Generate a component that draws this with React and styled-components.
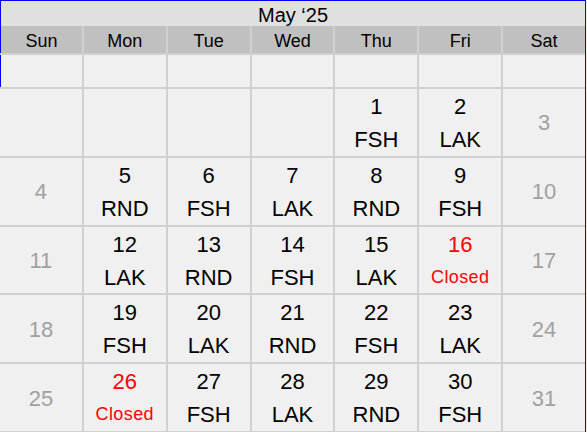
import React from "react";
import styled, { createGlobalStyle } from "styled-components";

const GlobalStyle = createGlobalStyle`
  html, body {
    margin: 0;
    padding: 0;
    background: #f0f0f0;
  }
  body {
    font-family: "Liberation Sans", Arial, sans-serif;
    color: #000;
  }
`;

const Sheet = styled.div`
  width: 586px;
  height: 432px;
  box-sizing: border-box;
  border-right: 1px solid #0000ff;
  display: flex;
  flex-direction: column;
  background: #f0f0f0;
`;

const Title = styled.div`
  height: 26px;
  border-top: 1px solid #0000ff;
  border-left: 1px solid #0000ff;
  background: #e0e0e0;
  display: flex;
  align-items: center;
  justify-content: center;
  font-size: 20px;
  padding-top: 3px;
  box-sizing: border-box;
`;

const HeaderRow = styled.div`
  display: grid;
  grid-template-columns: repeat(7, 1fr);
  column-gap: 2px;
  height: 27px;
  background: #d0d0d0;
`;

const HeaderCell = styled.div`
  background: #c0c0c0;
  display: flex;
  align-items: center;
  justify-content: center;
  font-size: 18px;
  padding-top: 4px;
  box-sizing: border-box;
  border-left: ${(p) => (p.$edge ? "1px solid #0000ff" : "none")};
`;

const Grid = styled.div`
  flex: 1;
  min-height: 0;
  display: grid;
  grid-template-columns: repeat(7, 1fr);
  grid-template-rows: 32px repeat(5, minmax(0, 1fr));
  gap: 2px;
  padding: 2px 0 1px;
  background: #d0d0d0;
`;

const Cell = styled.div`
  background: #f0f0f0;
  display: flex;
  flex-direction: column;
  align-items: center;
  justify-content: center;
  overflow: hidden;
  font-size: 22px;
  line-height: 33px;
  padding-top: 1px;
  box-sizing: border-box;
  color: ${(p) => (p.$weekend ? "#a0a0a0" : "#000")};
  border-left: ${(p) => (p.$edge ? "1px solid #0000ff" : "none")};
`;

const DayNum = styled.span`
  color: ${(p) => (p.$closed ? "#ff0000" : "inherit")};
`;

const Code = styled.span`
  color: ${(p) => (p.$closed ? "#ff0000" : "inherit")};
  font-size: ${(p) => (p.$closed ? "18px" : "22px")};
  letter-spacing: ${(p) => (p.$closed ? "0.4px" : "0")};
  line-height: 33px;
`;

const days = ["Sun", "Mon", "Tue", "Wed", "Thu", "Fri", "Sat"];

const weeks = [
  [null, null, null, null, [1, "FSH"], [2, "LAK"], [3]],
  [[4], [5, "RND"], [6, "FSH"], [7, "LAK"], [8, "RND"], [9, "FSH"], [10]],
  [[11], [12, "LAK"], [13, "RND"], [14, "FSH"], [15, "LAK"], [16, "Closed"], [17]],
  [[18], [19, "FSH"], [20, "LAK"], [21, "RND"], [22, "FSH"], [23, "LAK"], [24]],
  [[25], [26, "Closed"], [27, "FSH"], [28, "LAK"], [29, "RND"], [30, "FSH"], [31]],
];

export default function App() {
  return (
    <>
      <GlobalStyle />
      <Sheet>
        <Title>May ‘25</Title>
        <HeaderRow>
          {days.map((d, i) => (
            <HeaderCell key={d} $edge={i === 0}>
              {d}
            </HeaderCell>
          ))}
        </HeaderRow>
        <Grid>
          {days.map((d, i) => (
            <Cell key={"blank" + d} $edge={i === 0} />
          ))}
          {weeks.map((week, w) =>
            week.map((day, i) => {
              const weekend = i === 0 || i === 6;
              if (!day) return <Cell key={w + "-" + i} />;
              const [num, code] = day;
              const closed = code === "Closed";
              return (
                <Cell key={w + "-" + i} $weekend={weekend}>
                  <DayNum $closed={closed}>{num}</DayNum>
                  {code && <Code $closed={closed}>{code}</Code>}
                </Cell>
              );
            })
          )}
        </Grid>
      </Sheet>
    </>
  );
}
